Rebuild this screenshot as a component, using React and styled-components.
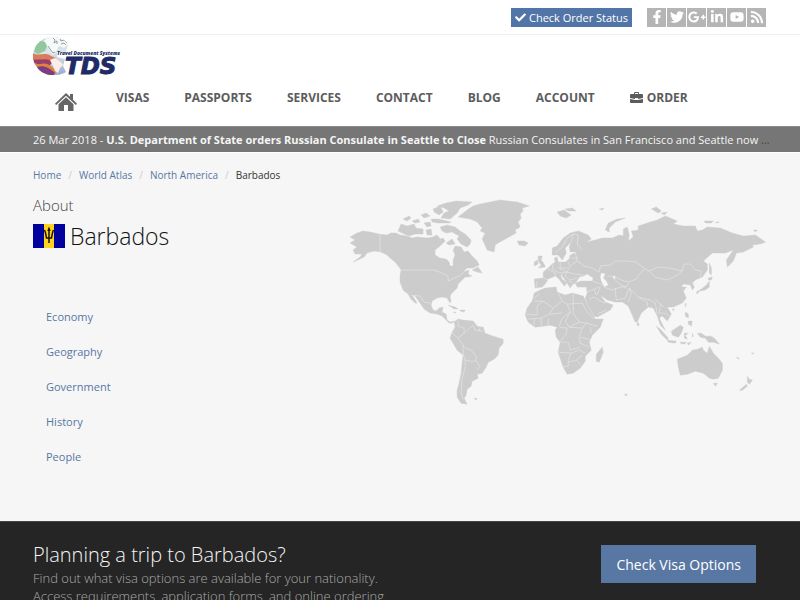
import React from 'react';
import styled, { createGlobalStyle } from 'styled-components';
import {
  FaCheck,
  FaFacebookF,
  FaTwitter,
  FaGooglePlusG,
  FaLinkedinIn,
  FaYoutube,
  FaRss,
} from 'react-icons/fa';

const socials = [
  { name: 'Facebook', Icon: FaFacebookF },
  { name: 'Twitter', Icon: FaTwitter },
  { name: 'Google Plus', Icon: FaGooglePlusG },
  { name: 'LinkedIn', Icon: FaLinkedinIn },
  { name: 'YouTube', Icon: FaYoutube },
  { name: 'RSS', Icon: FaRss },
];

const navItems = ['Visas', 'Passports', 'Services', 'Contact', 'Blog', 'Account'];
const crumbs = ['Home', 'World Atlas', 'North America'];
const sections = ['Economy', 'Geography', 'Government', 'History', 'People'];

// land masses of the world map
const land = [
  // north america
  'M350 237 357 233 363 231 370 232 379 234 387 235 391 233 396 233 400 235 407 236 412 238 417 237 427 238 433 237 436 235 438 236 440 239 443 238 445 241 440 246 435 250 435 255 440 258 446 259 449 262 450 266 453 266 453 260 455 255 453 250 455 246 461 247 464 252 468 251 471 255 477 261 479 265 473 268 467 268 463 272 469 270 468 274 472 276 468 277 465 277 461 281 458 284 457 288 451 294 450 297 451 301 450 303 448 300 447 298 442 297 437 298 432 301 431 305 433 310 436 311 439 308 443 307 442 312 446 314 447 320 450 322 455 321 452 323 449 323 445 319 442 316 437 314 430 313 424 309 420 303 415 296 412 295 417 303 415 303 411 299 408 294 403 290 400 282 400 275 401 270 399 267 395 262 390 258 387 255 381 252 375 251 370 252 367 253 364 257 358 260 353 262 360 257 362 254 355 254 353 250 357 247 350 243 355 240Z',
  // greenland
  'M458 217 467 210 473 206 480 204 490 202 500 200 508 201 517 202 529 206 522 208 523 211 520 214 521 218 518 222 520 227 515 230 516 233 507 238 498 243 495 245 494 252 487 250 484 243 482 239 485 233 480 231 482 228 477 222 470 219Z',
  // canadian arctic
  'M398 231 401 224 407 226 414 224 416 228 423 229 423 234 415 234 409 236 402 233Z',
  'M403 219 409 216 411 218 407 221Z M412 221 418 219 420 222 415 223Z M421 215 426 213 430 216 424 218Z M424 223 430 222 431 226 427 227Z M426 230 431 229 432 235 427 235Z M431 219 438 219 451 222 449 223 438 223 432 222Z',
  'M433 209 440 206 443 212 439 215 434 212Z M437 206 446 203 456 201 472 202 468 205 460 208 457 213 450 219 441 218 444 213 449 211 444 208Z',
  'M440 227 447 225 455 227 460 231 465 234 471 240 470 244 467 247 461 244 457 239 459 236 452 232 446 233 442 231Z M446 243 452 239 455 244 449 245Z M472 270 478 267 482 273 477 272Z',
  // caribbean
  'M448 305 455 307 458 309 454 309Z M460 310 465 310 464 312 460 311Z M453 312 456 312 455 313Z',
  // south america
  'M454 322 458 319 463 320 473 321 477 326 483 327 485 333 493 336 503 339 503 343 499 348 498 355 494 359 488 362 486 367 482 373 477 374 478 378 472 381 471 386 467 389 466 395 464 398 467 404 461 403 457 397 457 390 459 383 461 373 462 363 463 355 457 350 453 343 450 338 452 332 455 327Z M474 398 477 398 476 400Z',
  // africa
  'M534 293 540 290 545 288 556 287 557 292 565 295 572 293 583 296 585 300 588 307 593 315 595 319 603 319 600 327 592 335 589 342 591 350 585 356 585 361 580 368 573 373 567 374 563 367 560 358 558 352 560 342 556 337 555 330 557 327 550 325 543 326 535 327 528 322 525 315 527 308 532 301Z M602 347 603 352 599 362 596 361 596 354Z',
  // europe and asia
  'M552 248 557 246 563 238 570 233 578 231 588 235 591 239 586 242 595 240 602 238 612 238 619 235 623 236 623 229 627 227 629 235 628 241 633 237 631 231 638 230 638 226 650 222 657 220 665 216 677 221 673 224 683 226 695 226 697 231 702 230 707 227 720 228 732 233 743 236 755 235 765 242 760 244 752 245 753 247 743 252 736 253 733 261 727 267 726 260 733 250 725 253 712 253 703 261 707 264 707 270 702 277 695 280 692 283 694 287 692 290 690 285 683 284 681 287 686 287 683 291 686 298 682 303 673 307 667 307 671 314 667 321 662 316 659 318 663 326 665 330 660 325 657 316 653 308 648 307 641 313 637 322 635 322 631 313 628 306 622 302 615 302 607 300 600 295 605 302 613 305 610 310 597 317 594 316 588 306 585 298 587 293 586 287 577 287 575 283 581 281 587 281 592 281 593 278 587 274 583 276 579 277 576 282 572 285 570 288 567 283 563 277 560 275 562 279 567 283 564 286 558 278 555 276 548 279 545 284 542 287 535 288 534 279 543 278 543 272 548 268 552 264 555 262 554 258 557 257 558 262 565 262 569 259 570 255 577 252 570 252 569 247 571 242 565 248 566 253 562 260 558 255 552 255Z',
  // british isles and iceland
  'M538 256 542 256 541 260 544 264 545 267 538 268 541 265 538 261Z M534 262 537 260 538 264 534 266Z M517 241 524 241 528 243 525 246 519 245Z',
  // northern islands
  'M557 212 564 210 568 213 571 215 566 218 560 216Z M565 209 572 208 576 211 568 211Z M605 230 608 223 617 219 625 218 615 222 609 228 609 232Z M651 209 656 207 661 211 658 213Z M661 213 667 212 664 215Z M704 221 713 221 711 223 705 223Z M715 222 719 222 717 223Z M753 230 757 230 755 232Z M599 209 604 208 602 210Z',
  // japan, sakhalin
  'M709 263 711 268 711 275 709 273Z M708 278 712 277 711 280 708 280Z M709 281 709 287 705 290 699 291 697 294 696 292 701 289 706 285Z',
  // south east asia
  'M656 326 660 329 668 338 667 340 661 334Z M667 340 676 341 675 343 668 342Z M671 331 680 325 683 327 681 333 678 337 672 335Z M684 333 688 333 685 335 687 339 684 338Z M685 312 688 314 688 318 685 316Z M688 321 692 321 691 326 688 324Z M685 303 686 304 685 307Z M637 322 639 324 638 326 637 325Z M672 309 674 309 673 311Z',
  'M697 333 701 333 705 336 711 336 715 339 719 344 713 342 708 342 705 338 700 337Z M680 342 686 342 684 344 680 343Z M687 343 691 342 688 345Z M692 333 693 336 692 337Z',
  // australia and new zealand
  'M677 359 687 355 692 350 697 349 702 347 703 350 707 353 709 346 713 353 718 358 722 363 722 370 718 378 713 379 709 378 703 373 695 371 687 374 680 375 678 367Z M713 383 717 383 715 386Z M747 376 749 379 752 380 749 384 747 382Z M746 384 747 386 742 390 739 390Z M624 394 627 394 626 396Z M736 357 739 358 738 359Z M751 353 754 353 752 354Z',
];

const seas = [
  'M601 273 605 274 603 278 606 281 608 285 604 287 601 281 600 277Z',
  'M613 276 615 276 615 279 613 278Z',
];

const borders = [
  // north america
  'M380 234V252 M401 270H434L442 273 448 276 448 281 454 278 459 276 464 272 M411 295 420 296 424 302 430 303',
  // south america
  'M458 320 458 326 464 328 464 333 473 325 M464 333 458 338 452 333 M458 338 463 345 465 348 471 350 476 356 476 361 470 361 465 360 463 354 M476 361 480 366 477 370 M465 360 465 368 462 378 461 392 463 399 M473 325 475 330 483 331 M480 327 479 331 M463 345 463 355',
  // africa
  'M534 301 543 301 553 308 562 301 558 293 M539 294 531 300 M543 301 537 306 537 315 526 314 M553 308 549 314 541 318 528 319 M562 301 567 304 582 303 M573 294 573 305 M567 304 570 312 562 318 559 326 M549 314 562 313 M548 325 548 318 M541 326 541 318 M534 325 534 318 M573 305 573 313 579 322 587 323 M582 303 587 312 594 319 M570 312 565 321 569 327 579 322 M559 327 567 328 566 334 560 341 M569 327 582 328 586 323 597 326 M582 328 579 336 580 343 589 347 M560 342 568 342 570 350 580 347 M558 352 571 353 579 350 585 353 M571 353 568 360 568 366 562 367 M568 362 576 360 582 355 M576 360 581 365 M591 340 581 337 M591 333 590 327',
  // europe
  'M555 253 562 247 567 238 573 234 578 235 577 244 582 250 M573 234 571 242 M548 269 555 273 555 277 M553 264 552 269 559 273 567 272 575 274 583 275 M560 262 560 269 567 272 M568 262 570 267 567 272 M575 252 577 261 571 265 M577 261 584 266 592 268 599 272 M567 272 565 276 570 280 577 278 M543 278 549 280 M569 281 573 283 M571 258 578 258 M537 281 536 287 M558 268 568 268 M562 273 561 277',
  // asia
  'M599 272 600 266 610 265 615 261 626 261 636 262 645 269 649 271 658 267 670 268 681 271 684 264 690 264 695 270 701 271 700 277 M645 269 640 273 636 279 628 282 621 280 613 276 607 276 M649 271 655 277 667 280 677 275 683 270 M604 287 612 290 617 288 627 286 629 282 M615 288 616 300 M616 300 625 298 629 288 M629 288 638 297 650 300 655 303 657 314 M628 302 631 293 629 288 M592 281 598 283 603 285 M600 287 597 294 M587 292 594 289 599 287 M589 299 594 297 602 302 606 303 M597 314 606 310 M655 299 660 304 664 307 M660 304 659 313 665 313 669 316 M639 298 647 302 647 306 M612 277 618 283 626 288 M692 283 695 284 M594 289 596 295',
];

function Logo() {
  return (
    <LogoSvg viewBox="0 0 90 42" role="img" aria-label="Travel Document Systems">
      <defs>
        <linearGradient id="globe" x1="0" y1="0" x2="0" y2="1">
          <stop offset="0" stopColor="#b5d4cd" />
          <stop offset="0.4" stopColor="#dbe6ea" />
          <stop offset="1" stopColor="#9aa6cf" />
        </linearGradient>
        <clipPath id="disc">
          <path d="M20 1C26 1 31 3 35 8L33 16 24 16 24 21 32 23 30 30 33 36C28 39 24 39 20 39C9 39 0 31 0 20C0 9 9 1 20 1Z" />
        </clipPath>
      </defs>
      <g clipPath="url(#disc)">
        <rect width="40" height="40" fill="url(#globe)" />
        <path d="M15 0 28 0 36 8 31 12 26 10 24 14 20 19 15 12 11 5Z" fill="#f6f9f8" />
        <path d="M20 2 22 4 21 7 24 5 24 8 M27 3 28 5 31 4 34 7 M28 8 31 7 33 9 M15 10 17 13 20 17 22 16" fill="none" stroke="#78858f" strokeWidth="0.8" />
        <path d="M3 9 7 5 12 6 14 10 12 15 5 18 1 16Z" fill="#93c69b" />
        <path d="M0 17C6 21 12 15 18 20L23 22 20 26C12 21 8 26 0 23Z" fill="#dc7a5a" />
        <path d="M0 23C8 25 13 21 20 26L16 30C10 25 6 30 1 27Z" fill="#98406a" />
        <path d="M1 27C8 30 12 25 18 30L24 35 20 40 12 40Z" fill="#e37f3f" />
        <path d="M4 31C11 29 16 32 22 37L20 40 9 39Z" fill="#7a3f80" />
        <path d="M17 24 22 22 29 27 30 29 27 32 25 37 22 35 20 30Z" fill="#fbeee9" />
      </g>
      <text x="24" y="19" fontFamily="Open Sans, sans-serif" fontSize="5" fontWeight="800" fontStyle="italic" fill="#252d68">
        Travel Document Systems
      </text>
      <text x="32" y="38" fontFamily="DejaVu Sans, sans-serif" fontSize="23" fontWeight="700" fontStyle="italic" fill="#202a66" stroke="#202a66">
        TDS
      </text>
    </LogoSvg>
  );
}

function HomeIcon() {
  return (
    <svg width="22" height="18" viewBox="0 0 22 18" fill="currentColor" aria-hidden="true">
      <path d="M11 0 15 3.8V1H18V6.8L22 10.7 20.8 12 11 2.8 1.2 12 0 10.7Z" />
      <path d="M11 4.2 18.5 11.2V18H13V12H9V18H3.500V11.2Z" />
    </svg>
  );
}

function BriefcaseIcon() {
  return (
    <svg width="13" height="11" viewBox="0 0 13 11" fill="currentColor" aria-hidden="true">
      <path d="M4 2V1Q4 0 5 0H8Q9 0 9 1V2H12Q13 2 13 3V6L8 7V6H5V7L0 6V3Q0 2 1 2ZM5 2H8V1H5Z" fillRule="evenodd" />
      <path d="M0 7 5 8H8L13 7V10Q13 11 12 11H1Q0 11 0 10Z" />
    </svg>
  );
}

function Flag() {
  return (
    <svg width="32" height="24" viewBox="0 0 32 24" role="img" aria-label="Flag of Barbados">
      <path d="M0 0H32V24H0Z" fill="#00009c" />
      <path d="M11 0H21V24H11Z" fill="#ffd21c" />
      <path d="M16 5V19 M11.500 6C12.500 8 13 11 13.500 14H18.500C19 11 19.500 8 20.500 6 M15 7 16 4.500 17 7" fill="none" stroke="#14110c" strokeWidth="1.500" />
    </svg>
  );
}

function WorldMap() {
  return (
    <MapSvg viewBox="348 195 419 211" role="img" aria-label="World map">
      <g fill="#cccccc" stroke="#cccccc" strokeWidth="0.4" strokeLinejoin="round">
        {land.map((d) => (
          <path key={d} d={d} />
        ))}
      </g>
      <g fill="#f6f6f6">
        {seas.map((d) => (
          <path key={d} d={d} />
        ))}
      </g>
      <g fill="none" stroke="#e9e9e9" strokeWidth="0.6" strokeLinejoin="round">
        {borders.map((d) => (
          <path key={d} d={d} />
        ))}
      </g>
    </MapSvg>
  );
}

const App = () => {
  return (
    <>
      <GlobalStyle />
      <TopBar>
        <OrderStatus href="#status">
          <FaCheck size={11} /> Check Order Status
        </OrderStatus>
        <Socials>
          {socials.map(({ name, Icon }) => (
            <SocialLink key={name} href="#social" aria-label={name}>
              <Icon size={name === 'Google Plus' ? 18 : 14} />
            </SocialLink>
          ))}
        </Socials>
      </TopBar>
      <Header>
        <Logo />
        <Nav>
          <HomeLink href="#home" aria-label="Home">
            <HomeIcon />
          </HomeLink>
          {navItems.map((item) => (
            <NavLink key={item} href="#nav">
              {item}
            </NavLink>
          ))}
          <NavLink href="#order">
            <BriefcaseIcon />
            Order
          </NavLink>
        </Nav>
      </Header>
      <Ticker>
        26 Mar 2018 - <b>U.S. Department of State orders Russian Consulate in Seattle to Close</b>{' '}
        Russian Consulates in San Francisco and Seattle now <More>...</More>
      </Ticker>

      <Main>
        <Breadcrumb>
          {crumbs.map((crumb) => (
            <li key={crumb}>
              <a href="#crumb">{crumb}</a>
            </li>
          ))}
          <li>Barbados</li>
        </Breadcrumb>
        <Columns>
          <div>
            <About>About</About>
            <Title>
              <Flag />
              Barbados
            </Title>
            <SideMenu>
              {sections.map((section) => (
                <a key={section} href="#section">
                  {section}
                </a>
              ))}
            </SideMenu>
          </div>
          <WorldMap />
        </Columns>
      </Main>

      <Promo>
        <div>
          <PromoTitle>Planning a trip to Barbados?</PromoTitle>
          <PromoText>
            Find out what visa options are available for your nationality.
            <br />
            Access requirements, application forms, and online ordering.
          </PromoText>
        </div>
        <VisaButton type="button">Check Visa Options</VisaButton>
      </Promo>
    </>
  );
};

export default App;

const GlobalStyle = createGlobalStyle`
  * {
    box-sizing: border-box;
  }
  body {
    margin: 0;
    background: #f6f6f6;
    color: #333;
    font-family: 'Open Sans', sans-serif;
    font-size: 11px;
  }
  a {
    color: #5877a3;
    text-decoration: none;
  }
`;

const TopBar = styled.div`
  display: flex;
  justify-content: flex-end;
  align-items: center;
  gap: 15px;
  height: 35px;
  padding: 0 34px 0 33px;
  background: #fff;
  border-bottom: 1px solid #eee;
`;

const OrderStatus = styled.a`
  display: flex;
  align-items: center;
  gap: 3px;
  height: 19px;
  padding: 0 4px;
  background: #5275a7;
  color: #fff;
  font-size: 11px;
`;

const Socials = styled.div`
  display: flex;
  gap: 1px;
`;

const SocialLink = styled.a`
  display: flex;
  justify-content: center;
  align-items: center;
  width: 19px;
  height: 19px;
  background: #b5b5b5;
  color: #fff;
`;

const Header = styled.header`
  padding: 1px 33px 0;
  height: 91px;
  background: #fff;
`;

const LogoSvg = styled.svg`
  display: block;
  width: 90px;
  height: 42px;
`;

const Nav = styled.nav`
  display: flex;
  gap: 35px;
  padding: 10px 22px 0;
`;

const HomeLink = styled.a`
  height: 18px;
  padding-top: 5px;
  margin-right: 4px;
  color: #666;
`;

const NavLink = styled.a`
  display: flex;
  align-items: center;
  gap: 4px;
  height: 18px;
  color: #5c5c5c;
  font-size: 12px;
  font-weight: 700;
  text-transform: uppercase;
`;

const Ticker = styled.div`
  height: 27px;
  padding: 0 33px;
  border-top: 1px solid #8a8a8a;
  border-bottom: 1px solid #fff;
  background: #767676;
  color: #f5f5f5;
  line-height: 26px;
  white-space: nowrap;
  overflow: hidden;
`;

const More = styled.span`
  color: #444;
`;

const Main = styled.main`
  min-height: 368px;
  padding: 14px 33px;
`;

const Breadcrumb = styled.ol`
  display: flex;
  margin: 0;
  padding: 0;
  list-style: none;
  font-size: 10px;
  line-height: 16px;

  li + li::before {
    content: '/';
    padding: 0 7px;
    color: #ccc;
  }
`;

const Columns = styled.div`
  display: grid;
  grid-template-columns: 3fr 4fr;
  margin-top: 12px;
`;

const About = styled.div`
  color: #444;
  font-size: 15px;
  font-weight: 300;
  line-height: 20px;
`;

const Title = styled.h1`
  display: flex;
  align-items: center;
  gap: 5px;
  margin: 4px 0 0;
  color: #111;
  font-size: 23px;
  font-weight: 300;
  line-height: 34px;
`;

const SideMenu = styled.nav`
  display: flex;
  flex-direction: column;
  gap: 17px;
  padding: 55px 13px 0;
  font-size: 11px;
  line-height: 18px;
`;

const MapSvg = styled.svg`
  display: block;
  width: 100%;
`;

const Promo = styled.footer`
  display: flex;
  justify-content: space-between;
  align-items: flex-start;
  padding: 19px 44px 24px 33px;
  border-top: 1px solid #444;
  background: #252525;
`;

const PromoTitle = styled.h2`
  margin: 0;
  color: #f5f5f5;
  font-size: 20px;
  font-weight: 300;
  line-height: 28px;
`;

const PromoText = styled.p`
  margin: 0;
  color: #aaa;
  font-size: 13px;
  font-weight: 300;
  line-height: 18px;
`;

const VisaButton = styled.button`
  height: 38px;
  margin-top: 4px;
  padding: 0 15px;
  border: 0;
  background: #5877a3;
  color: #fff;
  font-family: inherit;
  font-size: 14px;
`;
